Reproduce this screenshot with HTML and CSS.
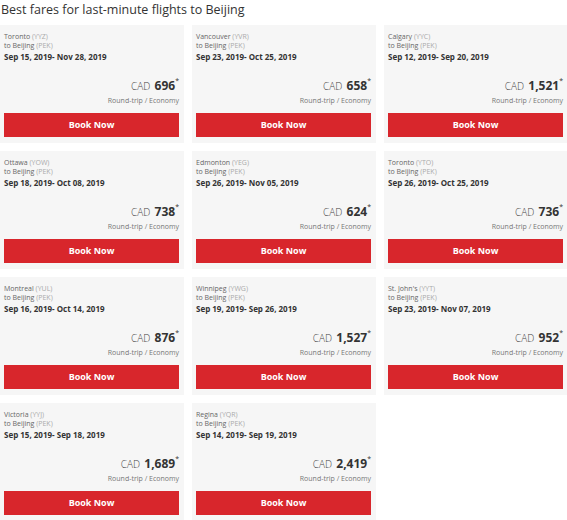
FILE: index.html
```html
<!DOCTYPE html>
<html>
<head>
<meta charset="utf-8">
<link rel="stylesheet" href="styles.css">
</head>
<body>
<div class="page">
  <h1 class="title">Best fares for last-minute flights to Beijing</h1>
  <div class="grid">
    <div class="card">
      <div class="route">Toronto <span class="code">(YYZ)</span></div>
      <div class="route">to Beijing <span class="code">(PEK)</span></div>
      <div class="dates">Sep 15, 2019- Nov 28, 2019</div>
      <div class="price"><span class="cur">CAD</span> <span class="amt">696</span><span class="star">*</span></div>
      <div class="trip">Round-trip / Economy</div>
      <a class="btn">Book Now</a>
    </div>
    <div class="card">
      <div class="route">Vancouver <span class="code">(YVR)</span></div>
      <div class="route">to Beijing <span class="code">(PEK)</span></div>
      <div class="dates">Sep 23, 2019- Oct 25, 2019</div>
      <div class="price"><span class="cur">CAD</span> <span class="amt">658</span><span class="star">*</span></div>
      <div class="trip">Round-trip / Economy</div>
      <a class="btn">Book Now</a>
    </div>
    <div class="card">
      <div class="route">Calgary <span class="code">(YYC)</span></div>
      <div class="route">to Beijing <span class="code">(PEK)</span></div>
      <div class="dates">Sep 12, 2019- Sep 20, 2019</div>
      <div class="price"><span class="cur">CAD</span> <span class="amt">1,521</span><span class="star">*</span></div>
      <div class="trip">Round-trip / Economy</div>
      <a class="btn">Book Now</a>
    </div>
    <div class="card">
      <div class="route">Ottawa <span class="code">(YOW)</span></div>
      <div class="route">to Beijing <span class="code">(PEK)</span></div>
      <div class="dates">Sep 18, 2019- Oct 08, 2019</div>
      <div class="price"><span class="cur">CAD</span> <span class="amt">738</span><span class="star">*</span></div>
      <div class="trip">Round-trip / Economy</div>
      <a class="btn">Book Now</a>
    </div>
    <div class="card">
      <div class="route">Edmonton <span class="code">(YEG)</span></div>
      <div class="route">to Beijing <span class="code">(PEK)</span></div>
      <div class="dates">Sep 26, 2019- Nov 05, 2019</div>
      <div class="price"><span class="cur">CAD</span> <span class="amt">624</span><span class="star">*</span></div>
      <div class="trip">Round-trip / Economy</div>
      <a class="btn">Book Now</a>
    </div>
    <div class="card">
      <div class="route">Toronto <span class="code">(YTO)</span></div>
      <div class="route">to Beijing <span class="code">(PEK)</span></div>
      <div class="dates">Sep 26, 2019- Oct 25, 2019</div>
      <div class="price"><span class="cur">CAD</span> <span class="amt">736</span><span class="star">*</span></div>
      <div class="trip">Round-trip / Economy</div>
      <a class="btn">Book Now</a>
    </div>
    <div class="card">
      <div class="route">Montreal <span class="code">(YUL)</span></div>
      <div class="route">to Beijing <span class="code">(PEK)</span></div>
      <div class="dates">Sep 16, 2019- Oct 14, 2019</div>
      <div class="price"><span class="cur">CAD</span> <span class="amt">876</span><span class="star">*</span></div>
      <div class="trip">Round-trip / Economy</div>
      <a class="btn">Book Now</a>
    </div>
    <div class="card">
      <div class="route">Winnipeg <span class="code">(YWG)</span></div>
      <div class="route">to Beijing <span class="code">(PEK)</span></div>
      <div class="dates">Sep 19, 2019- Sep 26, 2019</div>
      <div class="price"><span class="cur">CAD</span> <span class="amt">1,527</span><span class="star">*</span></div>
      <div class="trip">Round-trip / Economy</div>
      <a class="btn">Book Now</a>
    </div>
    <div class="card">
      <div class="route">St. John's <span class="code">(YYT)</span></div>
      <div class="route">to Beijing <span class="code">(PEK)</span></div>
      <div class="dates">Sep 23, 2019- Nov 07, 2019</div>
      <div class="price"><span class="cur">CAD</span> <span class="amt">952</span><span class="star">*</span></div>
      <div class="trip">Round-trip / Economy</div>
      <a class="btn">Book Now</a>
    </div>
    <div class="card">
      <div class="route">Victoria <span class="code">(YYJ)</span></div>
      <div class="route">to Beijing <span class="code">(PEK)</span></div>
      <div class="dates">Sep 15, 2019- Sep 18, 2019</div>
      <div class="price"><span class="cur">CAD</span> <span class="amt">1,689</span><span class="star">*</span></div>
      <div class="trip">Round-trip / Economy</div>
      <a class="btn">Book Now</a>
    </div>
    <div class="card">
      <div class="route">Regina <span class="code">(YQR)</span></div>
      <div class="route">to Beijing <span class="code">(PEK)</span></div>
      <div class="dates">Sep 14, 2019- Sep 19, 2019</div>
      <div class="price"><span class="cur">CAD</span> <span class="amt">2,419</span><span class="star">*</span></div>
      <div class="trip">Round-trip / Economy</div>
      <a class="btn">Book Now</a>
    </div>
  </div>
</div>
</body>
</html>
```
FILE: styles.css
```css
html, body {
  margin: 0;
  padding: 0;
  background: #ffffff;
}
body {
  font-family: "Open Sans", "Liberation Sans", sans-serif;
  color: #333333;
}
.page {
  width: 568px;
}
.title {
  margin: 0;
  padding: 2px 0 0 1px;
  height: 23px;
  font-size: 12.5px;
  font-weight: 400;
  line-height: 16px;
  color: #333333;
}
.grid {
  display: grid;
  grid-template-columns: repeat(3, 184px);
  column-gap: 8px;
  row-gap: 8px;
}
.card {
  background: #f6f6f6;
  height: 118px;
  box-sizing: border-box;
  padding: 7px 5px 6px 4px;
  display: flex;
  flex-direction: column;
}
.route {
  font-size: 7px;
  line-height: 9px;
  color: #666666;
}
.code {
  color: #aaaaaa;
}
.dates {
  font-size: 8px;
  font-weight: 700;
  line-height: 12px;
  margin-top: 1px;
  color: #333333;
}
.price {
  margin-top: auto;
  text-align: right;
  line-height: 16px;
  white-space: nowrap;
}
.cur {
  font-size: 10px;
  font-weight: 300;
  color: #444444;
}
.amt {
  font-size: 12px;
  font-weight: 700;
  color: #333333;
}
.star {
  font-size: 7px;
  vertical-align: top;
  line-height: 10px;
}
.trip {
  text-align: right;
  font-size: 7px;
  line-height: 13px;
  color: #777777;
  margin-bottom: 6px;
}
.btn {
  display: block;
  height: 24px;
  line-height: 24px;
  background: #d8262c;
  color: #ffffff;
  text-align: center;
  font-size: 9px;
  font-weight: 700;
}
```
